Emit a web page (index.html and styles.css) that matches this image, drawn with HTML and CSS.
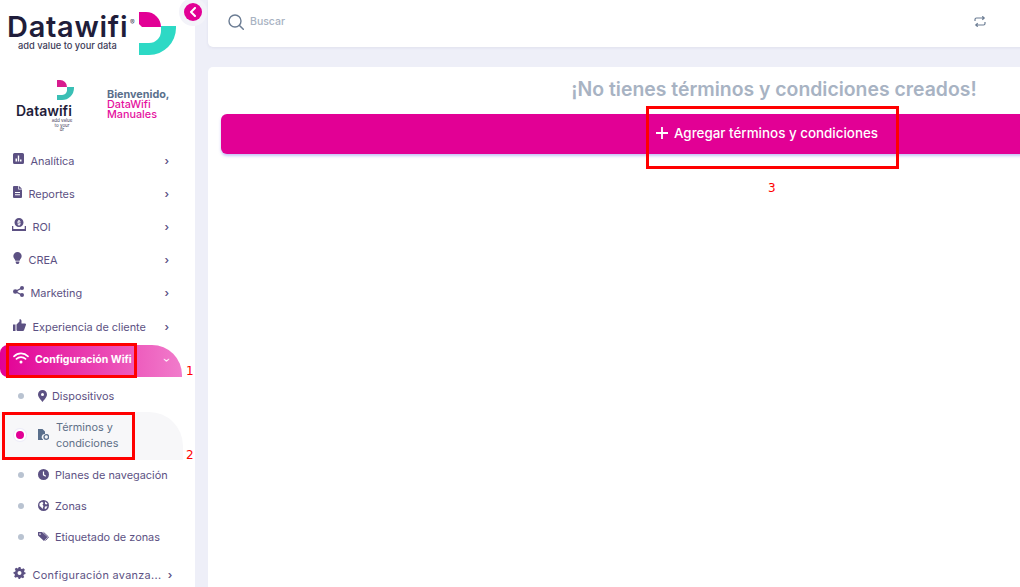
FILE: index.html
```html
<!DOCTYPE html>
<html lang="es">
<head>
<meta charset="utf-8">
<title>Términos y condiciones</title>
<link rel="stylesheet" href="styles.css">
</head>
<body>
<div class="app">
  <aside class="sidebar">
    <div class="brand">
      <div class="brand-text">
        <div class="brand-name">Datawifi</div>
        <div class="brand-tag">add value to your data</div>
      </div>
      <sup class="brand-reg">®</sup>
      <svg class="brand-mark" viewBox="0 0 37 43"><path fill="#e20095" d="M0 0H7A15 15 0 0 1 22 15H3L0 12Z"/><path fill="#2dd9c5" d="M22 14H37V16A27 27 0 0 1 10 43H0V31H10A12 12 0 0 0 22 19Z"/></svg>
    </div>
    <div class="user">
      <div class="user-logo">
        <svg class="user-mark" viewBox="0 0 17 20"><path fill="#d81b8e" d="M0 0H3A7 7 0 0 1 10 7H0Z"/><path fill="#3abfb5" d="M10 7H17V8A12 12 0 0 1 5 20H0V15H5A5 5 0 0 0 10 9Z"/></svg>
        <div class="user-name">Datawifi</div>
        <div class="user-tag">add value<br>to your<br>dr</div>
      </div>
      <div class="welcome">
        <div class="welcome-hi">Bienvenido,</div>
        <div class="welcome-org">DataWifi</div>
        <div class="welcome-org">Manuales</div>
      </div>
    </div>
    <nav class="nav">
      <a class="item"><svg class="ic w11" viewBox="0 0 11 11"><path fill="#5c5183" fill-rule="evenodd" d="M1.5 0h8A1.5 1.5 0 0 1 11 1.500v8A1.5 1.500 0 0 1 9.500 11h-8A1.500 1.500 0 0 1 0 9.500v-8A1.500 1.500 0 0 1 1.500 0ZM2.500 5.500V8.500H4V5.500ZM4.800 2.500V8.500H6.200V2.500ZM7 6.500V8.500H8.500V6.500Z"/></svg><span>Analítica</span><i class="chev">›</i></a>
      <a class="item"><svg class="ic w9" viewBox="0 0 9 12"><path fill="#5c5183" fill-rule="evenodd" d="M1 0H5.300V3.500H9V11a1 1 0 0 1-1 1H1a1 1 0 0 1-1-1V1a1 1 0 0 1 1-1ZM6 0 9 2.800H6ZM2 6V7H7V6ZM2 8.300V9.300H7V8.300Z"/></svg><span>Reportes</span><i class="chev">›</i></a>
      <a class="item"><svg class="ic w14" viewBox="0 0 14 13"><path fill="#5c5183" fill-rule="evenodd" d="M7 0a4.500 4.500 0 1 1 0 9 4.500 4.500 0 0 1 0-9ZM6.300 2V3.200H5.500V5H7.500V5.600H5.500V6.500H6.300V7.500H7.700V6.500H8.500V4.400H6.500V3.800H8.500V3H7.700V2ZM0 8H1.300V11H12.700V8H14V13H0Z"/></svg><span>ROI</span><i class="chev">›</i></a>
      <a class="item"><svg class="ic w9" viewBox="0 0 9 13"><path fill="#5c5183" d="M4.500 0A4.500 4.500 0 0 1 9 4.500C9 6.500 7.300 7.500 6.800 9.500H2.200C1.700 7.500 0 6.500 0 4.500A4.500 4.500 0 0 1 4.500 0ZM2.500 10.300H6.500V11.300L5.500 13H3.500L2.500 11.300Z"/></svg><span>CREA</span><i class="chev">›</i></a>
      <a class="item"><svg class="ic w11" viewBox="0 0 11 11"><circle cx="9" cy="2" r="2" fill="#5c5183"/><circle cx="2.300" cy="5.500" r="2.300" fill="#5c5183"/><circle cx="9" cy="9" r="2" fill="#5c5183"/><path stroke="#5c5183" stroke-width="1.400" fill="none" d="M9 2 2.300 5.500 9 9"/></svg><span>Marketing</span><i class="chev">›</i></a>
      <a class="item"><svg class="ic w13" viewBox="0 0 13 12"><path fill="#5c5183" d="M0 5.500H2.500V12H0ZM3.500 5.500 6.500 2.500V0.500C6.500 0 8.500-.3 8.500 2V4.500H12C13 4.500 13.300 5.500 12.800 6.300L11 11.300C10.800 11.800 10.300 12 10 12H5C4 12 3.500 11.500 3.500 11Z"/></svg><span>Experiencia de cliente</span><i class="chev">›</i></a>
      <a class="item active"><svg class="wifi" viewBox="0 0 16 12"><path fill="none" stroke="#fff" stroke-width="1.700" stroke-linecap="round" d="M1 4.300A10 10 0 0 1 15 4.300M3.500 6.900A6.500 6.500 0 0 1 12.500 6.900"/><circle cx="8" cy="10" r="1.500" fill="#fff"/></svg><span>Configuración Wifi</span><i class="chev down">›</i></a>
      <a class="sub"><b class="dot"></b><svg class="sic w9" viewBox="0 0 9 12"><path fill="#5c5183" fill-rule="evenodd" d="M4.500 0A4.500 4.500 0 0 1 9 4.500C9 7 6 10 4.500 12 3 10 0 7 0 4.500A4.500 4.500 0 0 1 4.500 0ZM4.500 3A1.500 1.500 0 1 0 4.500 6 1.500 1.500 0 0 0 4.500 3Z"/></svg><span>Dispositivos</span></a>
      <a class="sub current"><b class="dot"></b><svg class="sic w11" viewBox="0 0 11 11"><path fill="#5a6f8c" d="M0 0H4.500L7 2.500V5A3 3 0 0 0 5 10.500V11H0Z"/><circle cx="8.300" cy="8" r="2.300" fill="none" stroke="#5a6f8c" stroke-width="1.300"/></svg><span>Términos y<br>condiciones</span></a>
      <a class="sub"><b class="dot"></b><svg class="sic w11" viewBox="0 0 11 11"><circle cx="5.500" cy="5.500" r="5.500" fill="#5c5183"/><path fill="none" stroke="#fff" stroke-width="1.200" d="M5.500 2.500V5.800L7.800 7.200"/></svg><span>Planes de navegación</span></a>
      <a class="sub"><b class="dot"></b><svg class="sic w11" viewBox="0 0 11 11"><circle cx="5.500" cy="5.500" r="5.500" fill="#5c5183"/><path fill="#fff" d="M1.500 3.500 4 1.800 5.500 3 4.500 4.500 5.500 6 4.500 9 3 7 1.500 6ZM7 1.500 9.500 3.500 8.500 4.500 7 4ZM7 6.500 9.500 6.300 8 9 6.500 8.500Z"/></svg><span>Zonas</span></a>
      <a class="sub"><b class="dot"></b><svg class="sic w11" viewBox="0 0 11 9"><path fill="#5c5183" fill-rule="evenodd" d="M0 0H4L9.500 5 6 9 0 3.500ZM2 1.300A.8.800 0 1 0 2 2.900.8.800 0 0 0 2 1.300Z"/><path fill="none" stroke="#5c5183" stroke-width="1" d="M5.500 .3 10.500 5 7.500 8.500"/></svg><span>Etiquetado de zonas</span></a>
      <a class="item last"><svg class="ic w13" viewBox="0 0 24 24"><path fill="#5c5183" fill-rule="evenodd" d="M10 0H14L14.800 3.300 17 4.200 20 2.500 22.800 5.300 21 8.300 21.900 10.500 24 11V14L20.800 14.800 19.800 17 21.500 20 18.800 22.700 15.800 21 13.800 21.900 13.200 24H10.200L9.300 20.800 7 19.800 4 21.500 1.300 18.800 3 15.800 2.100 13.800 0 13.200V10.200L3.300 9.300 4.200 7 2.500 4 5.300 1.300 8.300 3 10 2.200ZM12 8A4 4 0 1 0 12 16 4 4 0 0 0 12 8Z"/></svg><span>Configuración avanza...</span><i class="chev">›</i></a>
    </nav>
  </aside>
  <main class="main">
    <header class="topbar">
      <svg class="search-ic" viewBox="0 0 16 16"><circle cx="7" cy="7" r="6" fill="none" stroke="#6b7c93" stroke-width="1.400"/><path stroke="#6b7c93" stroke-width="1.500" stroke-linecap="round" d="M11.500 11.500 15.300 15.300"/></svg>
      <span class="search-label">Buscar</span>
      <svg class="swap-ic" viewBox="0 0 12 11"><path fill="none" stroke="#6b7c93" stroke-width="1.200" d="M1 5V3.500A1.500 1.500 0 0 1 2.500 2H10M8.300 .3 10.200 2 8.300 3.700M11 6V7.500A1.500 1.500 0 0 1 9.500 9H2M3.700 7.300 1.800 9 3.700 10.700"/></svg>
    </header>
    <section class="card">
      <h1 class="empty">¡No tienes términos y condiciones creados!</h1>
      <button class="add"><svg class="plus" viewBox="0 0 12 12"><path stroke="#fff" stroke-width="1.800" d="M6 0V12M0 6H12"/></svg>Agregar términos y condiciones</button>
    </section>
  </main>
  <button class="collapse"><svg viewBox="0 0 8 10"><path fill="none" stroke="#fff" stroke-width="2" stroke-linecap="round" stroke-linejoin="round" d="M6 1 2 5 6 9"/></svg></button>
  <div class="mark m1"></div><span class="num n1">1</span>
  <div class="mark m2"></div><span class="num n2">2</span>
  <div class="mark m3"></div><span class="num n3">3</span>
</div>
</body>
</html>
```
FILE: styles.css
```css
* { box-sizing: border-box; }
html, body { margin: 0; height: 100%; overflow: hidden; }
body { background: #eeeff8; font-family: Inter, "Liberation Sans", sans-serif; color: #5c5183; }
.app { position: relative; display: flex; width: 1020px; height: 587px; overflow: hidden; }

.sidebar { flex: 0 0 195px; min-width: 0; height: 587px; background: #fff; display: flex; flex-direction: column; overflow: hidden; }
.brand { flex: none; display: flex; height: 75px; padding: 12px 0 0 7px; align-items: flex-start; }
.brand-text { width: 123px; }
.brand-name { font-size: 29px; line-height: 29px; font-weight: 600; color: #1f1d3a; letter-spacing: .7px; }
.brand-tag { font-size: 9.300px; line-height: 10px; margin: 0 0 0 11px; color: #3d3b58; font-weight: 500; white-space: nowrap; }
.brand-reg { font-size: 7px; line-height: 8px; margin: 7px 0 0 0; width: 9px; color: #3d3b58; vertical-align: baseline; }
.brand-mark { width: 37px; height: 43px; }

.user { flex: none; display: flex; height: 69px; }
.user-logo { width: 107px; display: flex; flex-direction: column; align-items: flex-start; padding: 5px 0 0 16px; }
.user-mark { width: 17px; height: 20px; margin-left: 41px; }
.user-name { font-size: 14px; line-height: 15px; font-weight: 600; color: #1f1d3a; margin-top: 3px; }
.user-tag { font-size: 4.500px; line-height: 4.500px; color: #3d3b58; width: 57px; text-align: center; margin-top: 1px; padding-left: 35px; white-space: nowrap; }
.welcome { padding-top: 15px; font-size: 10.800px; line-height: 10px; }
.welcome-hi { font-weight: 700; color: #5a6f8c; }
.welcome-org { color: #e512a0; font-weight: 500; }

.nav { flex: none; display: flex; flex-direction: column; }
.item { display: flex; align-items: center; height: 33.200px; padding: 0 26px 0 13px; font-size: 10.900px; white-space: nowrap; gap: 6.500px; color: #5c5183; }
.ic { flex: none; margin-bottom: 4px; }
.ic.w14 { margin-left: -1px; }
.w9 { width: 9px; height: 12px; }
.w11 { width: 11px; height: 11px; }
.w13 { width: 13px; height: 12px; }
.w14 { width: 14px; height: 13px; }
.chev { margin-left: auto; font-style: normal; font-size: 11px; line-height: 12px; color: #5c5183; font-weight: 600; }
.item.active { width: 182px; height: 32px; margin: 1.800px 0 4px; padding: 0 13px 2px; gap: 6px; font-size: 10.500px; border-radius: 8px 30px 0 8px; background: linear-gradient(90deg, #e20095, #f17ccb); color: #fff; font-weight: 700; }
.wifi { width: 16px; height: 12px; flex: none; margin-bottom: 4px; }
.chev.down { transform: rotate(90deg); color: #fff; font-weight: 400; }
.item.last { margin-top: 5px; padding-right: 24px; letter-spacing: .3px; }

.sub { flex: none; display: flex; align-items: center; height: 31px; padding: 0 0 1px 18px; font-size: 10.900px; color: #5c5183; white-space: nowrap; }
.dot { flex: none; width: 6px; height: 6px; border-radius: 50%; background: #b9c3d1; margin-right: 14px; }
.sic { flex: none; margin-right: 6px; }
.sic.w9 { margin-right: 5px; }
.sub.current { width: 183px; height: 48px; padding-bottom: 2px; line-height: 16px; background: #f7f7f9; border-radius: 0 34px 0 0; color: #5f7088; }
.sub.current .dot { width: 8px; height: 8px; margin: 0 14px 0 -2px; background: #e20095; box-shadow: 0 0 0 2px #fff, 0 0 0 3px #ecebf7; }
.sub.current .sic { margin-right: 7px; }

.main { flex: 0 0 1118px; margin-left: 13px; display: flex; flex-direction: column; gap: 20px; }
.topbar { height: 47px; background: #fff; border-radius: 0 0 0 5px; box-shadow: 0 1px 3px rgba(60, 60, 120, .08); display: flex; align-items: center; padding: 0 0 4px 20px; }
.search-ic { width: 16px; height: 16px; margin-right: 6px; }
.search-label { font-size: 10.500px; font-weight: 500; color: #a8b2c2; }
.swap-ic { width: 12px; height: 11px; margin-left: 689px; }
.card { flex: 1; background: #fff; border-radius: 5px 0 0 0; padding: 10px 13px 0; }
.empty { margin: 0 0 12px; padding-left: 14px; text-align: center; font-size: 19.400px; line-height: 25px; font-weight: 600; color: #a8b3c3; white-space: nowrap; }
.add { display: flex; align-items: center; justify-content: center; width: 100%; height: 40px; padding: 0 0 2px; border: 0; border-radius: 6px; background: #e20095; color: #fff; font: 500 13.400px Inter, "Liberation Sans", sans-serif; box-shadow: 0 2px 3px rgba(90, 90, 230, .35); }
.plus { width: 12px; height: 12px; margin-right: 6px; }

.collapse { position: absolute; left: 184px; top: 3px; width: 18px; height: 18px; padding: 0; border: 0; border-radius: 50%; background: #e20095; box-shadow: 0 0 0 5px #f3f3f9; display: flex; align-items: center; justify-content: center; }
.collapse svg { width: 8px; height: 10px; }

.mark { position: absolute; border: 3px solid #f00; }
.m1 { left: 6px; top: 343px; width: 131px; height: 35px; }
.m2 { left: 2px; top: 412px; width: 133px; height: 48px; }
.m3 { left: 646px; top: 106px; width: 253px; height: 63px; }
.num { position: absolute; color: #f00; font: 12px/14px "DejaVu Sans", sans-serif; }
.n1 { left: 186px; top: 364px; }
.n2 { left: 186px; top: 448px; }
.n3 { left: 768px; top: 181px; }
```
